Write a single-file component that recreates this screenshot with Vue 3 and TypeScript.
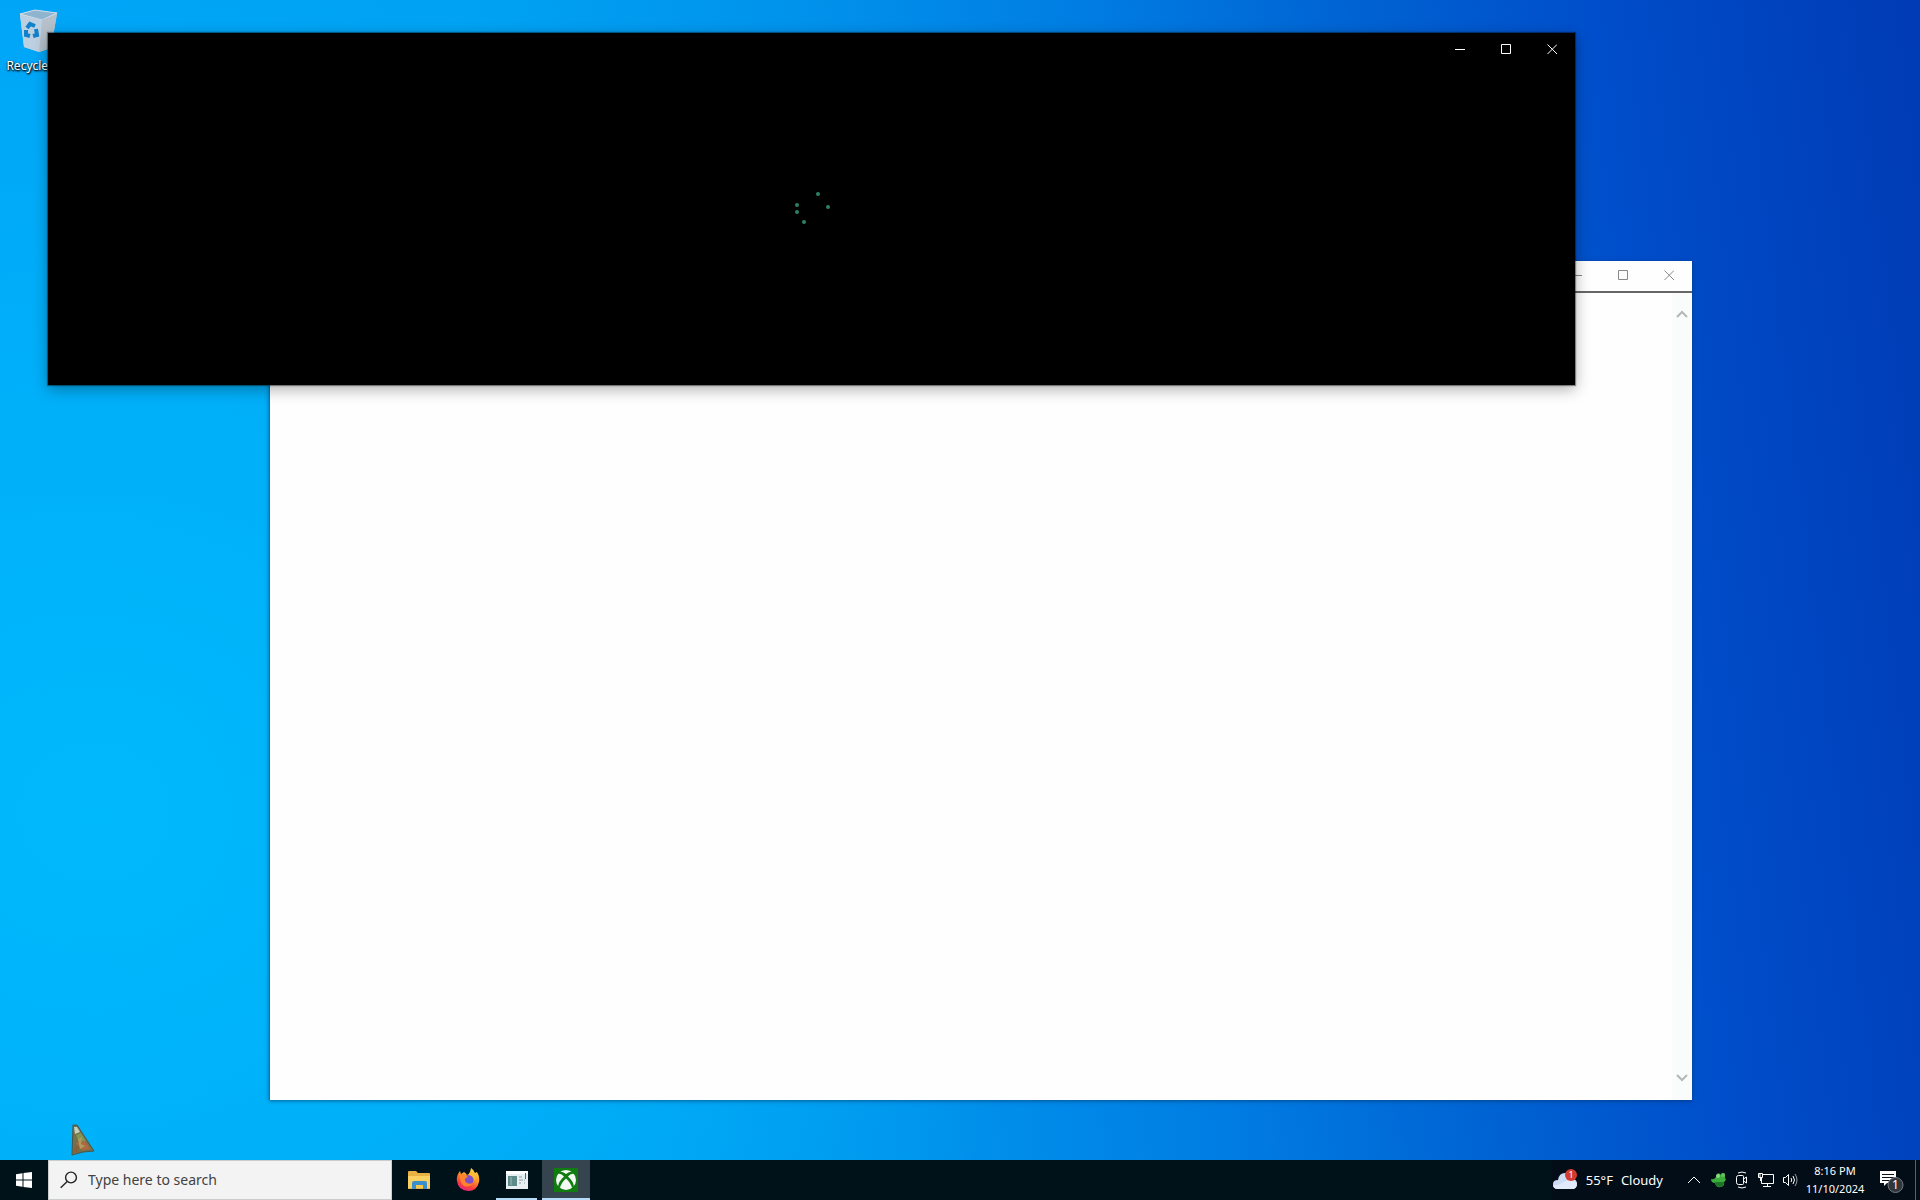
<script setup lang="ts">
import { ref } from 'vue'

const query = ref('')
const spinnerDots = [
  { x: 25, y: 5, r: 2 },
  { x: 35, y: 18, r: 2 },
  { x: 4, y: 16, r: 2 },
  { x: 4, y: 23, r: 2 },
  { x: 11, y: 33, r: 2 },
]
const captionIcons = [
  { label: 'Minimize', path: 'M0 5.5H10' },
  { label: 'Maximize', path: 'M.5 .5H9.5V9.5H.5Z' },
  { label: 'Close', path: 'M.5 .5L10 10M10 .5L.5 10' },
]
</script>

<template>
  <div class="screen">
    <main class="desktop">
      <a class="shortcut" href="#recycle-bin">
        <svg width="40" height="44" viewBox="0 0 40 44" aria-hidden="true">
          <path d="M2 5L17 1L39 4L33 39L21 43L6 38Z" fill="#c3d3e2" />
          <path d="M2 5L17 1L39 4L24 11Z" fill="#8fb4d0" stroke="#cfdde8" stroke-width="1" />
          <path d="M2 6L24 11L21 43L6 38Z" fill="#bdd0e1" />
          <path d="M24 11L39 5L33 39L21 43Z" fill="#b5c0ca" />
          <g fill="none" stroke="#1181cb" stroke-width="4">
            <path d="M9 19L12 15L17 17" />
            <path d="M18 20L19 26L15 27" />
            <path d="M12 27L8 26L8 21" />
          </g>
        </svg>
        <span>Recycle Bin</span>
      </a>

      <section class="window document" aria-label="Document">
        <header class="titlebar">
          <button v-for="icon in captionIcons" :key="icon.label" class="caption" :aria-label="icon.label">
            <svg width="10" height="10" viewBox="0 0 10 10"><path :d="icon.path" /></svg>
          </button>
        </header>
        <div class="page">
          <div class="scrollbar">
            <button aria-label="Scroll up">
              <svg width="12" height="8" viewBox="0 0 12 8"><path d="M1 7L6 2L11 7" /></svg>
            </button>
            <button aria-label="Scroll down">
              <svg width="12" height="8" viewBox="0 0 12 8"><path d="M1 1L6 6L11 1" /></svg>
            </button>
          </div>
        </div>
      </section>

      <section class="window xbox" aria-label="Xbox">
        <header class="titlebar">
          <button v-for="icon in captionIcons" :key="icon.label" class="caption" :aria-label="icon.label">
            <svg width="10" height="10" viewBox="0 0 10 10"><path :d="icon.path" /></svg>
          </button>
        </header>
        <div class="loading">
          <svg width="38" height="38" viewBox="0 0 38 38" aria-label="Loading">
            <circle v-for="dot in spinnerDots" :key="dot.x + '-' + dot.y" :cx="dot.x" :cy="dot.y" :r="dot.r" />
          </svg>
        </div>
      </section>

      <svg class="pointer" width="24" height="32" viewBox="0 0 24 32" aria-hidden="true">
        <path d="M2 1L6 1L23 27L12 28L1 31Z" fill="#73704a" stroke="#49564f" stroke-width="1" />
        <path d="M3 3L6 3L9 8L4 10Z" fill="#c3cebd" />
        <path d="M5 11L10 9L15 17L8 18Z" fill="#829455" />
        <path d="M5 19L14 17L19 25L11 26Z" fill="#b0693f" />
        <path d="M7 15L11 13L10 20L14 22L9 25Z" fill="#b09a60" />
        <path d="M3 24L8 21L7 28L3 29Z" fill="#8b6037" />
      </svg>
    </main>

    <footer class="taskbar">
      <button class="start" aria-label="Start">
        <svg width="16" height="16" viewBox="0 0 16 16"><path d="M0 2.2L6.5 1.3V7.5H0ZM7.5 1.1L16 0V7.5H7.5ZM0 8.5H6.5V14.7L0 13.8ZM7.5 8.5H16V16L7.5 14.9Z" fill="#fff" /></svg>
      </button>
      <label class="search">
        <svg width="18" height="18" viewBox="0 0 18 18" aria-hidden="true"><g fill="none" stroke="#222" stroke-width="1.4"><circle cx="11" cy="6.5" r="5.4" /><path d="M7.2 10.4L.7 16.8" /></g></svg>
        <input v-model="query" type="text" placeholder="Type here to search" aria-label="Search">
      </label>

      <nav class="apps">
        <button class="app" aria-label="File Explorer">
          <svg width="22" height="20" viewBox="0 0 22 20">
            <path d="M0 2Q0 1 1 1H8L10 3H21Q22 3 22 4V19H0Z" fill="#e9b143" />
            <path d="M0 6H22V18H0Z" fill="#fbd062" />
            <path d="M4 19V13Q4 11 6 11H17Q19 11 19 13V19H15V15H8V19Z" fill="#3b8fcb" />
            <path d="M8 15H15V18H8Z" fill="#f5c950" />
          </svg>
        </button>
        <button class="app" aria-label="Firefox">
          <svg width="24" height="24" viewBox="0 0 24 24">
            <defs>
              <linearGradient id="flame" x1=".8" y1="0" x2=".3" y2="1">
                <stop offset="0" stop-color="#ffe14a" /><stop offset=".4" stop-color="#ff9b28" /><stop offset=".75" stop-color="#fb3f3d" /><stop offset="1" stop-color="#e42486" />
              </linearGradient>
            </defs>
            <path d="M15 0Q18 2 19 5L21 4Q24 9 23 14Q21 23 12 23Q2 22 1 13Q0 8 4 3L5 6L8 4Q10 5 11 7Q14 6 15 0Z" fill="url(#flame)" />
            <circle cx="12.5" cy="12" r="5" fill="#8050c8" />
            <path d="M4 7Q9 5 12 9Q8 10 9 13Q11 17 17 15Q14 20 8 18Q3 14 4 7Z" fill="#ff842c" />
            <path d="M12 7Q18 7 19 13Q20 9 17 5Z" fill="#ffbd36" />
          </svg>
        </button>
        <button class="app running" aria-label="Document window">
          <svg width="22" height="18" viewBox="0 0 22 18">
            <path d="M0 0H22V18H0Z" fill="#e7eff1" />
            <path d="M0 0H22V3H0Z" fill="#fff" />
            <path d="M2 5H11V15H2Z" fill="#5f8a8a" />
            <path d="M4 6H6V14H4Z" fill="#7fa2a2" />
            <path d="M13 6H16M13 9H17M13 12H15M18 9H19M18 12H19" stroke="#a9b8bc" stroke-width="1.5" />
            <path d="M19 2H20V8H19Z" fill="#52666d" />
          </svg>
        </button>
        <button class="app active" aria-label="Xbox">
          <svg width="24" height="24" viewBox="0 0 24 24">
            <path d="M0 0H24V24H0Z" fill="#107c10" />
            <circle cx="12" cy="12" r="10" fill="#f4faf3" />
            <path d="M5 4Q8 3 12 6Q16 3 19 4L20 6Q17 5 14 8.5Q20 14 20 19L18 20Q17 15 12 10.5Q7 15 6 20L4 19Q4 14 10 8.5Q7 5 4 6Z" fill="#107c10" />
          </svg>
        </button>
      </nav>

      <div class="tray">
        <button class="weather">
          <svg width="26" height="22" viewBox="0 0 26 22" aria-hidden="true">
            <path d="M6 20Q1 20 1 15Q1 11 6 11Q7 4 13 4Q18 4 20 10Q25 10 25 15Q25 20 20 20Z" fill="#cddcf5" />
            <path d="M1 16Q6 17 14 12Q20 9 25 14Q25 20 20 20H6Q1 20 1 16Z" fill="#e2e9fa" />
            <circle cx="19" cy="6" r="6" fill="#d43a2d" />
            <text x="19" y="9" text-anchor="middle">1</text>
          </svg>
          <span>55°F</span><span>Cloudy</span>
        </button>
        <button class="status" aria-label="Show hidden icons">
          <svg width="14" height="8" viewBox="0 0 14 8"><path d="M1 7L7 1L13 7" class="line" /></svg>
        </button>
        <button class="status" aria-label="Notifier">
          <svg width="18" height="16" viewBox="0 0 18 16">
            <path d="M2 7Q5 8 7 5L8 2Q10 0 12 3Q14 0 16 2L16 6Q18 8 15 10Q16 14 12 15Q7 16 6 11Q2 11 2 7Z" fill="#3cae3b" />
            <path d="M6 10H15Q15 15 11 15Q7 15 6 10Z" fill="#1d7628" />
            <circle cx="9" cy="4" r="2" fill="#8fd67f" /><circle cx="14" cy="3" r="2" fill="#62c05e" />
          </svg>
        </button>
        <button class="status" aria-label="Meet now">
          <svg width="14" height="18" viewBox="0 0 14 18"><path d="M3.5 4.5H7.5Q8.5 4.5 8.5 5.5V12.5Q8.5 13.5 7.5 13.5H3.5Q1.5 13.5 1.5 11.5V6.5Q1.5 4.5 3.5 4.5ZM8.5 8L11.5 6V12L8.5 10M3 2Q7 0 11 2M3 16Q7 18 11 16" class="line" /></svg>
        </button>
        <button class="status" aria-label="Network">
          <svg width="18" height="16" viewBox="0 0 18 16"><path d="M6 2.5H16.5V11.5H4.5V6M10.5 11.5V14.5M6 14.5H14M1.5 1.5H5.5V5.5H1.5ZM3 1V5M3.5 6V9" class="line" /></svg>
        </button>
        <button class="status" aria-label="Volume">
          <svg width="16" height="16" viewBox="0 0 16 16"><path d="M1.5 5.5H3.5L6.5 2.5V13.5L3.5 10.5H1.5Z" class="line" /><path d="M9 6Q10.5 8 9 10M11 4Q14 8 11 12" class="line" /><path d="M13 2Q17 8 13 14" class="line faint" /></svg>
        </button>
        <button class="clock"><time>8:16 PM</time><span>11/10/2024</span></button>
        <button class="notifications" aria-label="1 new notification">
          <svg width="26" height="26" viewBox="0 0 26 26">
            <path d="M1 4H17V16H8L5 19V16H1Z" fill="#fff" />
            <path d="M3 7.5H15M3 10.5H15M3 13.5H12" stroke="#061218" />
            <circle cx="16.5" cy="18" r="7.5" fill="#30363b" stroke="#737a80" />
            <text x="16.5" y="22" text-anchor="middle">1</text>
          </svg>
        </button>
        <button class="show-desktop" aria-label="Show desktop" />
      </div>
    </footer>
  </div>
</template>

<style>
body { margin: 0; }
</style>

<style scoped>
.screen {
  display: grid;
  grid-template-rows: 1fr 40px;
  height: 100vh;
  overflow: hidden;
  font-family: "Noto Sans", "Open Sans", sans-serif;
}
button {
  margin: 0;
  padding: 0;
  border: 0;
  background: none;
  color: inherit;
  font: inherit;
}
svg { display: block; flex: none; }
.desktop {
  position: relative;
  overflow: hidden;
  background:
    radial-gradient(ellipse 50% 75% at 5% 70%, #00b9fc 0%, #00b5faaa 50%, #00acf600 100%),
    linear-gradient(83deg, #00a4f8 0%, #00a2f3 30%, #0092ec 46%, #007ce2 60%, #0062d2 73%, #004ecb 84%, #0045c1 91%, #003bb4 100%);
}
.shortcut {
  position: absolute;
  top: 9px;
  left: 0;
  display: flex;
  flex-direction: column;
  align-items: center;
  gap: 4px;
  width: 76px;
  color: #fff;
  font-size: 12px;
  line-height: 18px;
  text-decoration: none;
  text-shadow: 1px 1px 2px #000, 0 1px 2px #000;
  white-space: nowrap;
}
.window { position: absolute; display: flex; flex-direction: column; }
.document {
  top: 261px;
  right: 228px;
  bottom: 60px;
  left: 269px;
  box-sizing: border-box;
  border-left: 1px solid #38677f;
  background: #fefefe;
  box-shadow: 0 1px 4px #00305e99;
}
.xbox {
  top: 33px;
  right: 345px;
  left: 48px;
  height: 352px;
  background: #000;
  box-shadow: 0 0 1px 1px #0006, 0 4px 14px #0005;
}
.titlebar { display: flex; justify-content: flex-end; height: 32px; }
.caption { display: grid; place-items: center; width: 46px; }
.caption path { fill: none; stroke: #fff; stroke-width: 1; }
.document .titlebar {
  height: 28px;
  padding-bottom: 2px;
  border-bottom: 2px solid #666;
}
.document .caption path { stroke: #888; }
.page { display: flex; flex: 1; justify-content: flex-end; }
.scrollbar {
  display: flex;
  flex-direction: column;
  justify-content: space-between;
  width: 20px;
  padding: 13px 0 14px;
  background: #f9fcfb;
}
.scrollbar button { display: grid; place-items: center; height: 16px; }
.scrollbar path { fill: none; stroke: #b2b9b7; stroke-width: 2; }
.loading { display: grid; flex: 1; place-items: center; padding-bottom: 34px; }
.loading circle { fill: #2d8068; }
.pointer { position: absolute; bottom: 4px; left: 71px; }
.taskbar { display: flex; min-width: 0; background: #001219; color: #fff; }
.start { display: grid; place-items: center; width: 48px; }
.search {
  display: flex;
  align-items: center;
  gap: 10px;
  box-sizing: border-box;
  width: 344px;
  padding-left: 11px;
  border: 1px solid #c9cdce;
  background: #f3f3f3;
}
.search input {
  flex: 1;
  min-width: 0;
  padding: 0;
  border: 0;
  outline: 0;
  background: none;
  color: #333;
  font: 14px/20px "Noto Sans", sans-serif;
}
.search input::placeholder { color: #424242; opacity: 1; }
.apps { display: flex; padding-left: 2px; }
.app { position: relative; display: grid; place-items: center; width: 49px; }
.app.active { width: 48px; margin-left: 1px; background: #35444e; }
.running::after, .active::after {
  position: absolute;
  right: 4px;
  bottom: 0;
  left: 4px;
  height: 2px;
  background: #b4dcfa;
  content: "";
}
.active::after { right: 0; left: 0; }
.tray { display: flex; align-items: stretch; margin-left: auto; background: #020d18; }
.weather { display: flex; align-items: center; gap: 8px; padding-right: 19px; font-size: 13px; }
.weather text { fill: #fff; font-size: 9px; }
.status { display: grid; place-items: center; width: 24px; }
.line { fill: none; stroke: #fff; stroke-width: 1; }
.faint { opacity: 0.6; }
.clock {
  display: flex;
  flex-direction: column;
  align-items: center;
  justify-content: center;
  width: 66px;
  font-size: 11px;
  line-height: 18px;
}
.notifications { display: grid; place-items: center; width: 47px; }
.notifications text { fill: #fff; font-size: 12px; }
.show-desktop { width: 5px; border-left: 1px solid #58616a; }
</style>
